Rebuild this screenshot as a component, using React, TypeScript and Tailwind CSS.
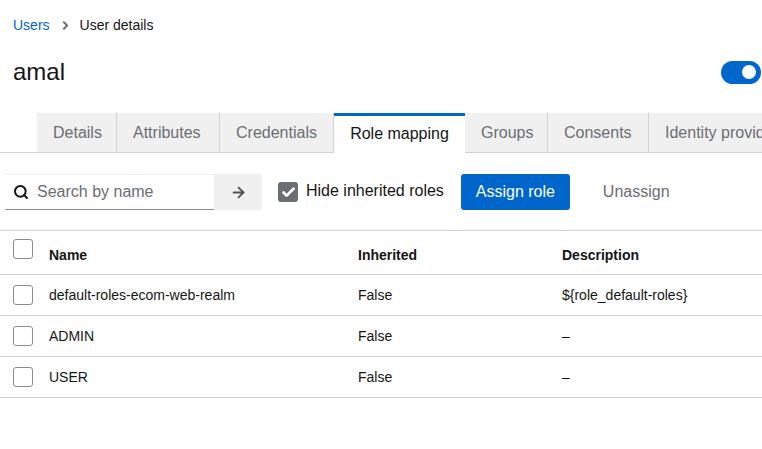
import { ArrowRight, ChevronRight, Search, Check } from 'lucide-react';

const tabs = [
  { label: 'Details', w: 'w-[80px]' },
  { label: 'Attributes', w: 'w-[103px]' },
  { label: 'Credentials', w: 'w-[114px]' },
  { label: 'Role mapping', w: 'w-[131px]', active: true },
  { label: 'Groups', w: 'w-[83px]' },
  { label: 'Consents', w: 'w-[101px]' },
  { label: 'Identity providers links', w: 'w-[140px]' },
];

const rows = [
  { name: 'default-roles-ecom-web-realm', inherited: 'False', description: '${role_default-roles}' },
  { name: 'ADMIN', inherited: 'False', description: '–' },
  { name: 'USER', inherited: 'False', description: '–' },
];

function Checkbox({ checked = false }: { checked?: boolean }) {
  if (checked) {
    return (
      <div className="flex h-[20px] w-[20px] shrink-0 items-center justify-center rounded-[3px] bg-[#6a6e73]">
        <Check className="h-[15px] w-[15px] text-white" strokeWidth={4.5} />
      </div>
    );
  }
  return <div className="h-[20px] w-[20px] shrink-0 rounded-[3px] border border-[#8a8d90] bg-white" />;
}

export default function App() {
  return (
    <div className="h-[449px] w-[762px] overflow-hidden bg-white font-['Liberation_Sans',Arial,sans-serif] text-[#151515]">
      <div className="px-[13px] pt-[16px]">
        <div className="flex h-[18px] items-center text-[14px]">
          <span className="text-[#0066cc]">Users</span>
          <ChevronRight className="ml-[9px] mr-[8px] h-[13px] w-[13px] text-[#6a6e73]" strokeWidth={3.5} />
          <span>User details</span>
        </div>
        <div className="mt-[25px] flex h-[26px] items-center justify-between">
          <h1 className="text-[24px] leading-none">amal</h1>
          <div className="-mr-[12px] flex h-[23px] w-[40px] items-center justify-end rounded-full bg-[#0066cc] pr-[5px]">
            <div className="h-[14px] w-[14px] rounded-full bg-white" />
          </div>
        </div>
      </div>

      <div className="mt-[28px] flex h-[40px] border-b border-[#d2d2d2] pl-[37px]">
        {tabs.map((t) =>
          t.active ? (
            <div
              key={t.label}
              className={`${t.w} relative z-10 -mb-px flex shrink-0 items-center justify-center border-t-[3px] border-[#0066cc] bg-white pb-[1px] text-[16px] text-[#151515]`}
            >
              {t.label}
            </div>
          ) : (
            <div
              key={t.label}
              className={`${t.w} flex shrink-0 items-center whitespace-nowrap border-r border-[#d2d2d2] bg-[#f0f0f0] pl-[16px] text-[16px] text-[#6a6e73]`}
            >
              {t.label}
            </div>
          )
        )}
      </div>

      <div className="mt-[21px] flex h-[36px] items-center">
        <div className="ml-[5px] flex h-[36px] w-[209px] items-center border-t border-b border-t-[#f0f0f0] border-b-[#8a8d90] pl-[8px]">
          <Search className="h-[16px] w-[16px] text-[#151515]" strokeWidth={3} />
          <span className="ml-[8px] text-[16px] text-[#6a6e73]">Search by name</span>
        </div>
        <div className="flex h-[36px] w-[48px] items-center justify-center bg-[#f0f0f0]">
          <ArrowRight className="h-[17px] w-[17px] text-[#4f5255]" strokeWidth={2.5} />
        </div>
        <div className="ml-[16px] flex items-center">
          <Checkbox checked />
          <span className="mb-[3px] ml-[8px] text-[16px]">Hide inherited roles</span>
        </div>
        <button className="ml-[17px] h-[36px] w-[109px] rounded-[3px] bg-[#0066cc] text-[16px] text-white">Assign role</button>
        <span className="ml-[33px] text-[16px] text-[#6a6e73]">Unassign</span>
      </div>

      <div className="mt-[20px] border-t border-[#d2d2d2]">
        <div className="flex h-[44px] border-b border-[#d2d2d2] text-[14px] font-bold">
          <div className="w-[49px] pl-[13px] pt-[8px]">
            <Checkbox />
          </div>
          <div className="w-[309px] pt-[14px]">Name</div>
          <div className="w-[204px] pt-[14px]">Inherited</div>
          <div className="pt-[14px]">Description</div>
        </div>
        {rows.map((r) => (
          <div key={r.name} className="flex h-[41px] items-center border-b border-[#d2d2d2] text-[14px]">
            <div className="w-[49px] pl-[13px]">
              <Checkbox />
            </div>
            <div className="w-[309px]">{r.name}</div>
            <div className="w-[204px]">{r.inherited}</div>
            <div>{r.description}</div>
          </div>
        ))}
      </div>
    </div>
  );
}
